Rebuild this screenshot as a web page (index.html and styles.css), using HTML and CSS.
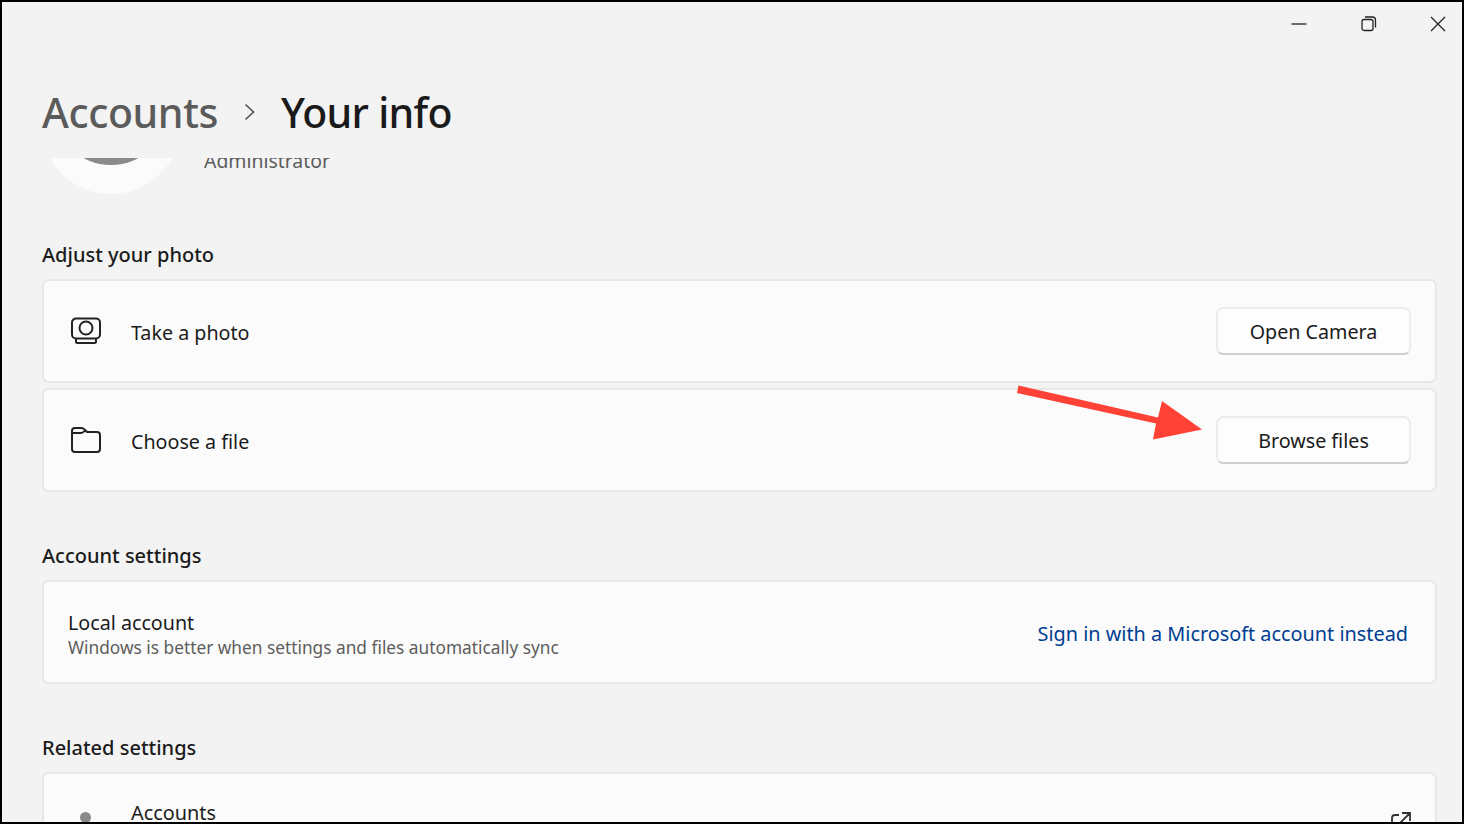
FILE: index.html
```html
<!DOCTYPE html>
<html lang="en">
<head>
<meta charset="utf-8">
<title>Your info</title>
<link rel="stylesheet" href="styles.css">
</head>
<body>
<div class="window">
  <div class="titlebar">
    <svg class="ctl ctl-min" width="16" height="16" viewBox="0 0 16 16"><path d="M0.5 8h15" /></svg>
    <svg class="ctl ctl-max" width="16" height="16" viewBox="0 0 16 16"><rect x="1" y="3.5" width="11" height="11" rx="2"/><path d="M4 1h7.5a3 3 0 0 1 3 3v7.5"/></svg>
    <svg class="ctl ctl-close" width="16" height="16" viewBox="0 0 16 16"><path d="M1 1l14 14M15 1L1 15"/></svg>
  </div>
  <header class="crumbs">
    <span class="crumb-parent">Accounts</span>
    <svg class="crumb-sep" width="12" height="18" viewBox="0 0 12 18"><path d="M1.5 1.5l8 7.5-8 7.5"/></svg>
    <span class="crumb-current">Your info</span>
  </header>
  <main class="scroll">
    <div class="profile">
      <div class="avatar"><div class="avatar-head"></div></div>
      <div class="role">Administrator</div>
    </div>

    <h2 class="section-title first">Adjust your photo</h2>
    <section class="card">
      <svg class="row-icon" width="32" height="28" viewBox="0 0 32 28"><path d="M6 1.5h20a4 4 0 0 1 4 4v12a4 4 0 0 1-4 4H6a4 4 0 0 1-4-4v-12a4 4 0 0 1 4-4z"/><circle cx="16" cy="11" r="6.5"/><path d="M6 21.5v3a1.5 1.5 0 0 0 1.500 1.500h17a1.500 1.500 0 0 0 1.500-1.500v-3"/></svg>
      <span class="row-label">Take a photo</span>
      <button class="btn">Open Camera</button>
    </section>
    <section class="card card-next">
      <svg class="row-icon" width="32" height="28" viewBox="0 0 32 28"><path d="M2 7V5a3 3 0 0 1 3-3h6.500a4 4 0 0 1 3 1.500L17 6h10a3 3 0 0 1 3 3v14a3 3 0 0 1-3 3H5a3 3 0 0 1-3-3V7h9a4 4 0 0 0 3-1.500L15.500 4"/></svg>
      <span class="row-label">Choose a file</span>
      <button class="btn">Browse files</button>
    </section>

    <h2 class="section-title">Account settings</h2>
    <section class="card card-account">
      <div class="account-text">
        <div class="account-name">Local account</div>
        <div class="account-desc">Windows is better when settings and files automatically sync</div>
      </div>
      <a class="link" href="#">Sign in with a Microsoft account instead</a>
    </section>

    <h2 class="section-title">Related settings</h2>
    <section class="card card-related">
      <span class="related-dot"></span>
      <span class="related-label">Accounts</span>
      <svg class="related-ext" width="20" height="20" viewBox="0 0 20 20"><path d="M8 3H4a3 3 0 0 0-3 3v9a3 3 0 0 0 3 3h10a3 3 0 0 0 3-3v-3M11 1h8v8M19 1L9 11"/></svg>
    </section>
  </main>
  <svg class="arrow" width="200" height="70" viewBox="1010 380 200 70"><path d="M1018.500 385.500L1158 417.500L1162 401L1202 429.500L1153 439.500L1156 423.500L1017 393z"/></svg>
</div>
</body>
</html>
```
FILE: styles.css
```css
* { box-sizing: border-box; }
html, body { margin: 0; padding: 0; height: 100%; overflow: hidden; }
body {
  font-family: "Noto Sans", "Open Sans", "Liberation Sans", sans-serif;
  color: #1b1b1b;
}
.window {
  position: relative;
  width: 1464px;
  height: 824px;
  background: #f3f3f3;
  border: 2px solid #000;
  display: flex;
  flex-direction: column;
  overflow: hidden;
}
.titlebar {
  height: 44px;
  flex: none;
  display: flex;
  justify-content: flex-end;
  align-items: flex-start;
  padding: 14px 16px 0 0;
  gap: 53px;
}
.ctl { fill: none; stroke: #222; stroke-width: 1.3; flex: none; }
.ctl-min { margin-right: 1px; }
.crumbs {
  height: 112px;
  flex: none;
  padding: 35px 0 0 40px;
  display: flex;
  align-items: flex-start;
  line-height: 62px;
  font-size: 41px;
  font-weight: 500;
  letter-spacing: -0.4px;
}
.crumb-parent { color: #5b5b5b; }
.crumb-current { color: #1a1a1a; letter-spacing: -0.7px; }
.crumb-sep { fill: none; stroke: #555; stroke-width: 1.700; margin: 22px 25px 0 26px; }
.scroll {
  flex: 1;
  min-height: 0;
  overflow: hidden;
  padding: 0 25px 0 40px;
}
.profile {
  height: 36px;
  position: relative;
  overflow: visible;
  display: flex;
  padding-left: 162px;
}
.avatar {
  position: absolute;
  left: -1px;
  top: -104px;
  width: 140px;
  height: 140px;
  border-radius: 50%;
  background: #fbfbfb;
  overflow: hidden;
}
.avatar-head {
  position: absolute;
  left: 13px;
  top: -3px;
  width: 114px;
  height: 114px;
  border-radius: 50%;
  background: #8a8a8a;
}
.role {
  font-size: 19.4px;
  line-height: 28px;
  color: #5d5d5d;
  margin-top: -11px;
  height: 22px;
  overflow: hidden;
}
.section-title {
  margin: 0;
  font-size: 20px;
  font-weight: 500;
  line-height: 28px;
  color: #1b1b1b;
  height: 28px;
  margin-top: 50px;
  margin-bottom: 10px;
}
.section-title.first { margin-top: 47px; }
.card {
  background: #fbfbfb;
  border: 2px solid #e8e8e8;
  border-radius: 7px;
  height: 104px;
  display: flex;
  align-items: center;
  padding: 0 24px 0 26px;
}
.card-next { margin-top: 5px; }
.row-icon { fill: none; stroke: #222; stroke-width: 2; flex: none; margin-right: 29px; }
.row-label { font-size: 19.7px; flex: 1; color: #1b1b1b; padding-top: 3px; }
.btn {
  width: 195px;
  height: 48px;
  background: #fdfdfd;
  border: 2px solid #ececec;
  border-bottom-color: #cfcfcf;
  border-radius: 7px;
  font: inherit;
  font-size: 19.7px;
  color: #1b1b1b;
  padding: 1px 0 0;
}
.card-account { justify-content: space-between; padding-right: 27px; padding-left: 24px; }
.account-text { padding-top: 4px; }
.account-name { font-size: 19.7px; line-height: 28px; color: #1b1b1b; }
.account-desc { font-size: 17.300px; line-height: 24px; color: #5d5d5d; margin-top: -1px; }
.link { font-size: 19.85px; color: #003e92; text-decoration: none; padding-top: 3px; }
.card-related { height: 120px; align-items: flex-start; padding-left: 36px; position: relative; }
.related-dot {
  width: 11px;
  height: 11px;
  border-radius: 50%;
  background: #8a8a8a;
  margin-top: 38px;
  flex: none;
}
.related-label { font-size: 19.85px; line-height: 28px; margin-left: 40px; margin-top: 25px; flex: 1; }
.related-ext { fill: none; stroke: #333; stroke-width: 1.800; margin-top: 38px; }
.arrow { position: absolute; left: 1008px; top: 378px; fill: #ff4136; }
```
